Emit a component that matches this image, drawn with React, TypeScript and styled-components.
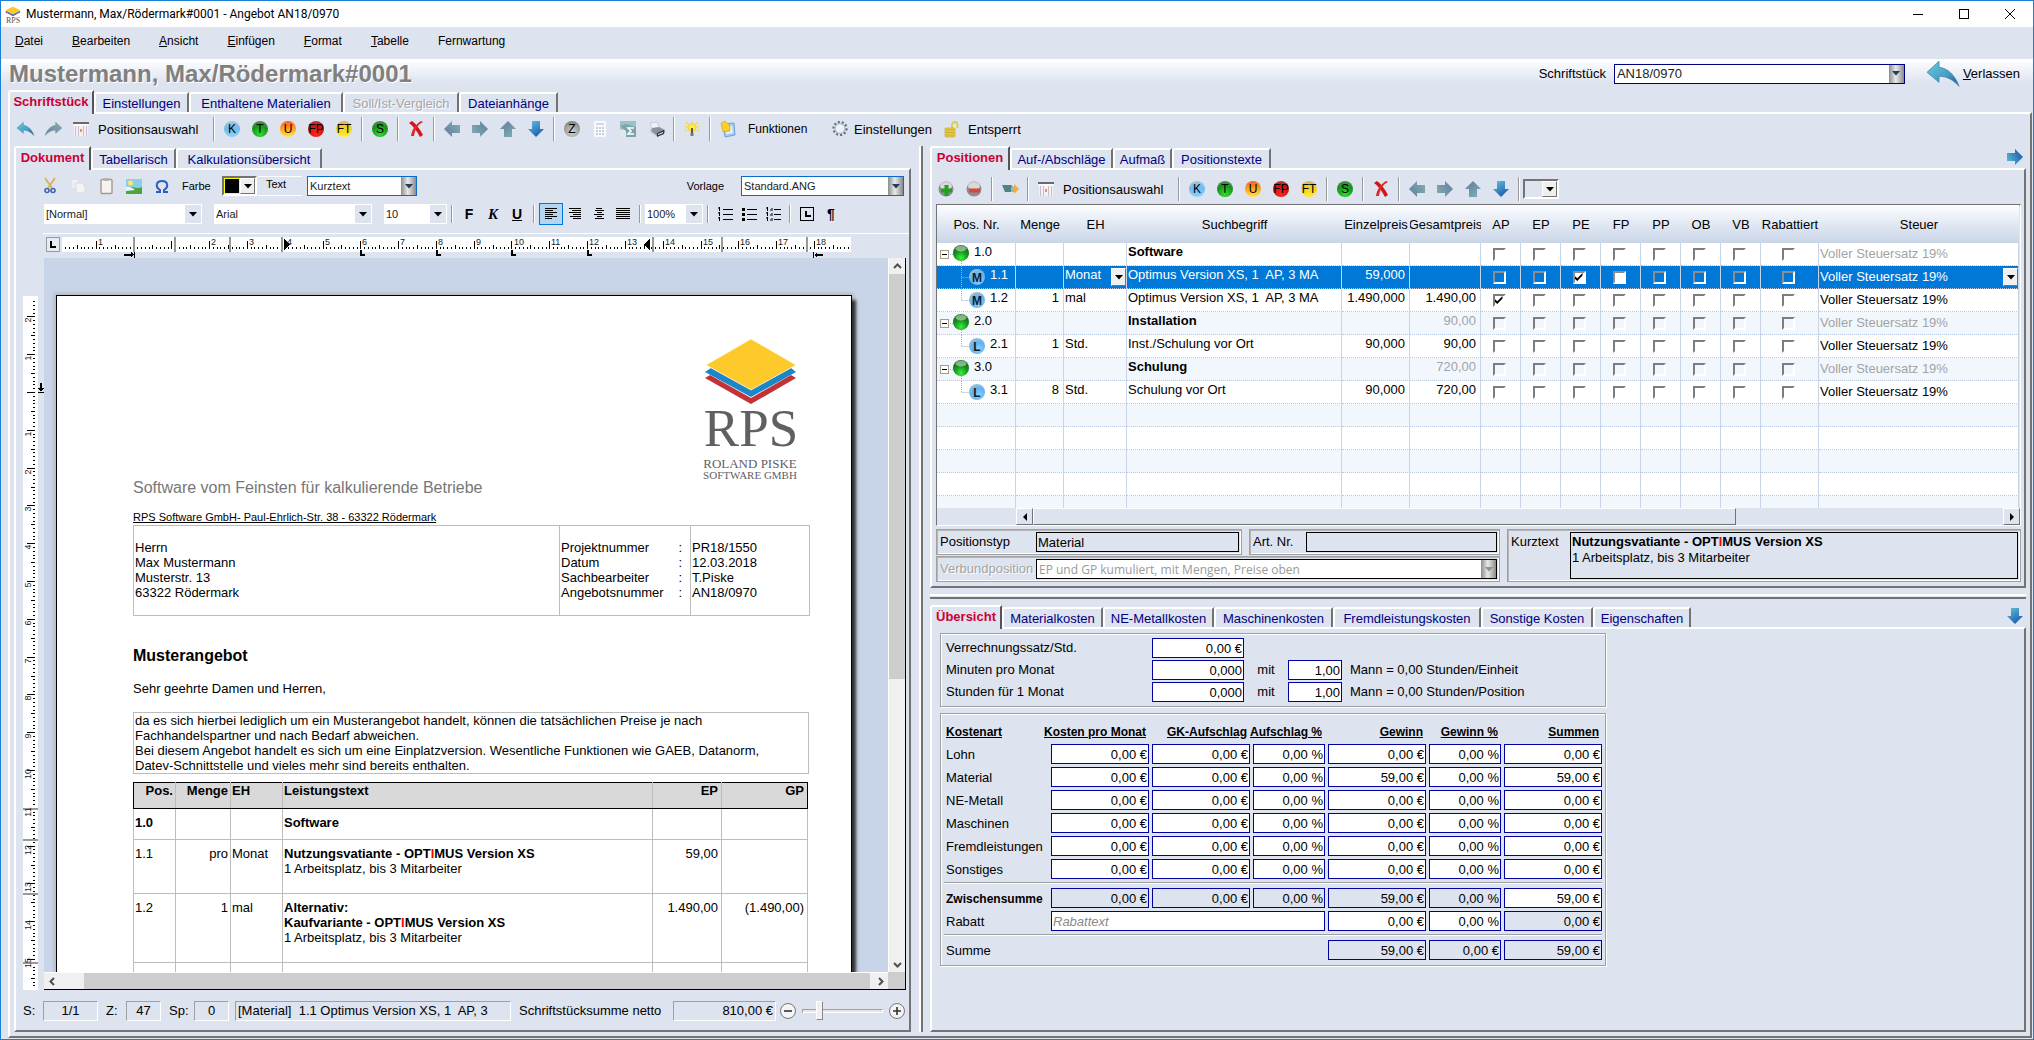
import React from 'react';
import styled, { createGlobalStyle, css } from 'styled-components';

const face = '#dde3ef';
const canvasBlue = '#c8d4e7';
const navy = '#00007f';
const shade = '#737373';
const line = '#a0a0a0';

const GlobalStyle = createGlobalStyle`
  * { box-sizing: border-box; }
  html, body { margin: 0; height: 100%; }
  body, button, input, select, textarea {
    font-family: "Liberation Sans", Arial, sans-serif;
    font-size: 13px;
    color: #000;
  }
  button, input, select { margin: 0; padding: 0; border: 0; border-radius: 0; background: none; }
  h1, h2, p { margin: 0; }
  svg { display: block; flex: none; overflow: visible; }
`;

/* ---------- window chrome ---------- */

const Window = styled.div`
  display: flex;
  flex-direction: column;
  height: 100vh;
  min-height: 800px;
  border: 1px solid #1a7fd6;
  background: ${face};
`;

const TitleBar = styled.header`
  display: flex;
  align-items: center;
  flex: none;
  height: 26px;
  padding-left: 4px;
  gap: 5px;
  background: #fff;
  font-family: Roboto, "Open Sans", sans-serif;
  font-size: 12px;
  line-height: 20px;
`;

const WindowButtons = styled.div`
  display: flex;
  margin-left: auto;
`;

const WindowButton = styled.button`
  display: grid;
  place-items: center;
  width: 46px;
  height: 26px;
`;

const MenuBar = styled.nav`
  display: flex;
  align-items: center;
  flex: none;
  height: 32px;
  gap: 29px;
  padding: 0 14px 4px;
`;

const MenuItem = styled.button`
  font-size: 12px;
  line-height: 20px;
`;

const HeadRow = styled.div`
  display: flex;
  align-items: center;
  flex: none;
  height: 31px;
  padding: 0 13px 2px 8px;
  background: linear-gradient(#fff, ${face} 24px);
`;

const Heading = styled.h1`
  flex: 1;
  font-size: 24px;
  line-height: 28px;
  color: #808080;
  text-shadow: 1px 1px 0 #fff;
`;

const HeadLabel = styled.label`
  margin-right: 8px;
`;

const LeaveButton = styled.button`
  display: flex;
  align-items: center;
  gap: 4px;
  margin-left: 22px;
`;

/* ---------- tabs and panels ---------- */

const TabBar = styled.div`
  display: flex;
  align-items: flex-end;
  flex: none;
  height: 22px;
  padding-right: 3px;
`;

const Tab = styled.button<{ $w: number; $active?: boolean }>`
  width: ${p => p.$w}px;
  height: 20px;
  padding-top: 2px;
  border-top: 2px solid #fff;
  border-left: 2px solid #fff;
  border-right: 2px solid ${shade};
  border-top-left-radius: 3px;
  background: ${face};
  color: ${navy};
  line-height: 16px;
  white-space: nowrap;
  &:disabled { color: #a6a6a6; text-shadow: 1px 1px 0 #fff; }
  ${p => p.$active && css`
    position: relative;
    z-index: 1;
    height: 24px;
    margin-bottom: -2px;
    padding-bottom: 4px;
    border-right-color: #555;
    color: #cc0033;
    font-weight: bold;
  `}
`;

const TabTail = styled.button`
  align-self: flex-start;
  margin-left: auto;
  padding-top: 3px;
`;

const Panel = styled.section`
  display: flex;
  flex-direction: column;
  flex: 1;
  min-height: 0;
  border-style: solid;
  border-width: 2px;
  border-color: #fff ${shade} ${shade} #fff;
`;

const MainPanel = styled(Panel)`
  padding: 0 4px 4px 1px;
`;

const MainWrap = styled.main`
  display: flex;
  flex-direction: column;
  flex: 1;
  min-height: 0;
  margin: 0 1px 1px 7px;
`;

const Columns = styled.div`
  display: grid;
  grid-template-columns: minmax(0, 897fr) 19px minmax(0, 1096fr);
  flex: 1;
  min-height: 0;
  margin-left: 3px;
`;

const Column = styled.div`
  display: flex;
  flex-direction: column;
  min-height: 0;
`;

const SplitterV = styled.div`
  width: 4px;
  margin-left: 8px;
  border-left: 2px solid #fff;
  border-right: 2px solid ${shade};
`;

const SplitterH = styled.div`
  flex: none;
  height: 5px;
  margin: 6px 0;
  border-top: 2px solid #fff;
  border-bottom: 2px solid ${shade};
`;

/* ---------- toolbars ---------- */

const Toolbar = styled.div<{ $h: number; $top?: number; $bottom?: number; $left?: number }>`
  display: flex;
  align-items: center;
  flex: none;
  height: ${p => p.$h}px;
  padding: ${p => `${p.$top ?? 0}px 0 ${p.$bottom ?? 0}px ${p.$left ?? 0}px`};
`;

const IconButton = styled.button`
  display: grid;
  place-items: center;
  flex: none;
  width: 28px;
  height: 24px;
`;

const TextButton = styled.button<{ $small?: boolean; $w?: number; $indent?: number }>`
  flex: none;
  width: ${p => (p.$w ? p.$w + 'px' : 'auto')};
  font-size: ${p => (p.$small ? 12 : 13)}px;
  text-align: left;
  padding-left: ${p => p.$indent ?? 3}px;
`;

const Sep = styled.span`
  flex: none;
  width: 2px;
  height: 24px;
  margin: 0 3px;
  border-left: 1px solid #999;
  border-right: 1px solid #fff;
`;

const FormatSep = styled(Sep)`
  height: 18px;
  margin: 0 4px;
`;

const BallFace = styled.span<{ $tone: string }>`
  display: grid;
  place-items: center;
  width: 16px;
  height: 16px;
  border-radius: 50%;
  background: ${p => p.$tone};
  font-size: 12px;
  line-height: 16px;
`;

const tones = {
  blue: 'linear-gradient(#a9c9dc, #6fbaf0 45%, #8fd2fb)',
  green: 'radial-gradient(circle at 50% 80%, #2fe02f, #1a921a 55%, #6c8f6c)',
  orange: 'linear-gradient(#ff5a1e, #ff9d1e 45%, #ffe84a)',
  red: 'radial-gradient(circle at 50% 80%, #ff2a1a, #d01010 55%, #b0504a)',
  yellow: 'linear-gradient(#d9b45a, #f6d020 45%, #ffee30)',
  grey: 'radial-gradient(circle at 50% 70%, #d5d5d5, #989898 60%, #6c6c6c)',
};

function Ball({ tone, children }: { tone: keyof typeof tones; children: string }) {
  return (
    <IconButton>
      <BallFace $tone={tones[tone]}>{children}</BallFace>
    </IconButton>
  );
}

/* ---------- combo boxes ---------- */

type ComboLook = 'metal' | 'flat' | 'classic';

const ComboFrame = styled.div<{ $w: number; $look: ComboLook; $edge?: string; $ink?: string }>`
  display: flex;
  flex: none;
  width: ${p => p.$w}px;
  height: 20px;
  border: ${p => (p.$look === 'flat' ? '0' : `1px solid ${p.$edge ?? '#1060c0'}`)};
  background: ${p => (p.$look === 'classic' ? face : '#fff')};
  ${p => p.$look === 'classic' && `
    border-width: 2px;
    border-color: ${shade} #fff #fff ${shade};
  `}
  select {
    appearance: none;
    flex: 1;
    min-width: 0;
    padding-left: 2px;
    font-size: ${p => (p.$w > 200 ? 13 : 11)}px;
    color: ${p => p.$ink ?? '#222'};
    opacity: 1;
  }
`;

const ComboArrow = styled.span<{ $look: ComboLook }>`
  display: grid;
  place-items: center;
  flex: none;
  width: ${p => (p.$look === 'flat' ? 18 : 15)}px;
  background: ${p => (p.$look === 'metal' ? 'linear-gradient(90deg, #8d8d8d, #e8e8e8 45%, #d0d0d0 60%, #8a8a8a)' : p.$look === 'flat' ? face : '#efefef')};
  ${p => p.$look === 'flat' && 'border: 1px solid #fff;'}
  ${p => p.$look === 'classic' && `border: 1px solid; border-color: #fff ${shade} ${shade} #fff;`}
`;

const Caret = ({ color = '#000' }: { color?: string }) => (
  <svg width="8" height="5" viewBox="0 0 8 5"><path d="M0 0H8L4 4.5Z" fill={color} /></svg>
);

function Combo(p: { value: string; w: number; look: ComboLook; id?: string; name: string; edge?: string; ink?: string; disabled?: boolean; caret?: string }) {
  return (
    <ComboFrame $w={p.w} $look={p.look} $edge={p.edge} $ink={p.ink}>
      <select id={p.id} aria-label={p.name} defaultValue={p.value} disabled={p.disabled}>
        <option>{p.value}</option>
      </select>
      <ComboArrow $look={p.look}><Caret color={p.caret ?? (p.look === 'metal' ? '#1d3f66' : '#000')} /></ComboArrow>
    </ComboFrame>
  );
}

/* ---------- icons ---------- */

const Swoosh = ({ size, flip, grey }: { size: number; flip?: boolean; grey?: boolean }) => (
  <svg width={size} height={size * 0.8} viewBox="0 0 32 25">
    <defs>
      <linearGradient id={grey ? 'swG' : 'swB'} x1="0" y1="0" x2="1" y2="1">
        <stop offset="0" stopColor={grey ? '#86aeb8' : '#66cbd8'} />
        <stop offset="0.6" stopColor={grey ? '#7593a3' : '#479dc4'} />
        <stop offset="1" stopColor={grey ? '#6d8194' : '#174f8d'} />
      </linearGradient>
    </defs>
    <path
      transform={flip ? 'translate(32 0) scale(-1 1)' : undefined}
      d="M0 11 12 0V6C21 7 28 14 32 25 26 18 19 15 12 15V21Z"
      fill={`url(#${grey ? 'swG' : 'swB'})`}
      stroke={grey ? '#7792a0' : '#3f88a8'}
      strokeWidth="0.8"
    />
  </svg>
);

const Arrow = ({ turn = 0, strong }: { turn?: number; strong?: boolean }) => (
  <svg width="16" height="16" viewBox="0 0 16 16">
    <defs>
      <linearGradient id={strong ? 'arS' : 'arW'} x1="1" y1="0" x2="0" y2="0.6">
        <stop offset="0" stopColor={strong ? '#62c2da' : '#7fb0b4'} />
        <stop offset="1" stopColor={strong ? '#1d5db0' : '#6783a0'} />
      </linearGradient>
    </defs>
    <path transform={`rotate(${turn} 8 8)`} d="M0 8 8 0V4H16V12H8V16Z" fill={`url(#${strong ? 'arS' : 'arW'})`} />
  </svg>
);

const CrossIcon = () => (
  <svg width="16" height="16" viewBox="0 0 16 16">
    <path d="M1 2C5 5 9 10 12 16L15 14C12 8 8 3 4 0Z" fill="#d3141a" />
    <path d="M15 1C9 4 7 9 6 15L3 15C4 8 8 3 13 0Z" fill="#e0242a" />
  </svg>
);

const PickIcon = () => (
  <svg width="16" height="14" viewBox="0 0 16 14">
    <rect x="1" y="1" width="14" height="13" fill="#f4f1f6" />
    <path d="M0 1H16" stroke="#333" strokeWidth="1.4" />
    <path d="M0 3H16" stroke="#fff" />
    <path d="M2.5 4V14M13.5 4V14M5.5 4V14M10.5 4V14" stroke="#c9bccb" />
    <rect x="7" y="7" width="2" height="3" fill="#f29438" />
  </svg>
);

const CalcIcon = () => (
  <svg width="14" height="16" viewBox="0 0 14 16">
    <rect x="1" y="0" width="12" height="16" rx="1" fill="#f8f9fc" />
    <path d="M3 3H11" stroke="#d4d9e4" strokeWidth="2" />
    <path d="M3 7H11M3 10H11M3 13H11" stroke="#c9cfdc" strokeWidth="2" strokeDasharray="2 1" />
  </svg>
);

const SumIcon = () => (
  <svg width="16" height="16" viewBox="0 0 16 16">
    <rect width="16" height="16" fill="#9fc0c4" />
    <path d="M0 9C4 7 8 12 16 8V16H0Z" fill="#dfe9e7" />
    <path d="M0 5 6 3 16 6V16H6V10Z" fill="#7aa5ab" />
    <path d="M14 7H8L11 10 8 13H14" fill="none" stroke="#fff" strokeWidth="1.6" />
  </svg>
);

const PrinterIcon = () => (
  <svg width="17" height="15" viewBox="0 0 17 15">
    <path d="M2 1 9 0 12 6 4 7Z" fill="#eef1f6" stroke="#b2b8c2" strokeWidth="0.6" />
    <path d="M1 6 3 9 9 12V14L2 11Z" fill="#cfd4de" />
    <path d="M4 6 11 5 17 8V11L9 14 3 9Z" fill="#8d929b" />
    <path d="M9 11 16 8V12L9 15Z" fill="#34373d" />
    <path d="M10 12 15 10V11L10 13Z" fill="#fff" />
  </svg>
);

const BulbIcon = () => (
  <svg width="16" height="16" viewBox="0 0 16 16">
    <path d="M8 0V2M1 5 3 6M15 5 13 6M2 1 4 3M14 1 12 3M1 10 3 9M15 10 13 9" stroke="#f5d84a" strokeWidth="1.4" />
    <circle cx="8" cy="6.5" r="4" fill="#ffe94a" stroke="#e6bf1c" strokeWidth="0.6" />
    <path d="M7 7H9V12H7Z" fill="#6b5a20" />
    <path d="M6.5 12H9.5V15H6.5Z" fill="#777" />
  </svg>
);

const ScriptIcon = () => (
  <svg width="16" height="16" viewBox="0 0 16 16">
    <path d="M3 3 14 2 15 14 5 16Z" fill="#a9cdf0" stroke="#5d92cc" strokeWidth="0.8" />
    <path d="M6 6 12 5 13 12 6 13Z" fill="#e8f2fc" />
    <path d="M1 2 5 0 10 5 10 10 3 11Z" fill="#f7d02c" stroke="#d19a10" strokeWidth="0.6" />
  </svg>
);

const GearIcon = () => (
  <svg width="16" height="16" viewBox="0 0 16 16">
    <circle cx="8" cy="7.5" r="5" fill="#eef2f8" stroke="#b4bdca" strokeWidth="1.4" />
    <circle cx="8" cy="7.5" r="6.6" fill="none" stroke="#5f6b7a" strokeWidth="2" strokeDasharray="2 2.1" />
  </svg>
);

const LockIcon = () => (
  <svg width="15" height="17" viewBox="0 0 15 17">
    <path d="M8 8V4C8 0 13.5 0 13.5 4V7" fill="none" stroke="#e2c94c" strokeWidth="1.8" />
    <rect x="1" y="7" width="10" height="9" rx="1" fill="#e9cf45" stroke="#bf9f22" strokeWidth="0.6" />
    <path d="M2 9H10M2 11.5H10M2 14H10" stroke="#c9aa2c" />
  </svg>
);

const ScissorsIcon = () => (
  <svg width="12" height="16" viewBox="0 0 12 16">
    <path d="M1 0 8 10M11 0 4 10" stroke="#d9b45a" strokeWidth="2" />
    <circle cx="3" cy="12.5" r="2" fill="none" stroke="#3f66ad" strokeWidth="1.6" />
    <circle cx="9" cy="12.5" r="2" fill="none" stroke="#3f66ad" strokeWidth="1.6" />
  </svg>
);

const CopyIcon = () => (
  <svg width="14" height="16" viewBox="0 0 14 16">
    <path d="M0 1H6L8 3V11H0Z" fill="#eceef2" stroke="#d3d6dc" strokeWidth="0.6" />
    <path d="M5 5H11L14 8V15H5Z" fill="#f4f4f4" stroke="#cacdd3" strokeWidth="0.6" />
  </svg>
);

const PasteIcon = () => (
  <svg width="13" height="16" viewBox="0 0 13 16">
    <rect x="1" y="1.5" width="11" height="14" rx="1" fill="#f5f3f0" stroke="#a8988a" strokeWidth="1.4" />
    <rect x="4" y="0" width="5" height="3" fill="#b8b2ac" />
  </svg>
);

const ImageIcon = () => (
  <svg width="16" height="15" viewBox="0 0 16 15">
    <rect width="16" height="15" fill="#8ccdf0" />
    <circle cx="4.5" cy="4" r="2.5" fill="#ffe95c" />
    <path d="M0 10C5 6 10 11 16 8V15H0Z" fill="#4aa53a" />
    <path d="M0 8C5 7 7 10 9 11L0 12Z" fill="#eaf6fb" />
  </svg>
);

const OmegaIcon = () => (
  <svg width="14" height="13" viewBox="0 0 14 13">
    <path d="M1 12H5V10C0 7 1 1 7 1S14 7 9 10V12H13" fill="none" stroke="#2b5fc4" strokeWidth="2" />
  </svg>
);

const RoundIcon = ({ plus }: { plus?: boolean }) => (
  <svg width="16" height="16" viewBox="0 0 16 16">
    <circle cx="8" cy="8" r="7.5" fill="#8f8b97" />
    <ellipse cx="8" cy="5" rx="6" ry="4" fill="#d9d7dd" />
    {plus
      ? <path d="M8.5 4V15M3 9.5H14" stroke="#1fa31f" strokeWidth="4" />
      : <path d="M3 9.5H14" stroke="#dc4437" strokeWidth="4" />}
  </svg>
);

const TagIcon = () => (
  <svg width="17" height="10" viewBox="0 0 17 10">
    <path d="M0 1H9L12 4V8H3Z" fill="#4f8580" />
    <path d="M9 3H12V8H9Z" fill="#9fb3c8" />
    <path d="M12 0 17 5 12 10Z" fill="#eeae3a" />
  </svg>
);

const BarsIcon = ({ rows }: { rows: [number, number][] }) => (
  <svg width="14" height="12" viewBox="0 0 14 12">
    {rows.map(([x, w], i) => <rect key={i} x={x} y={i * 2} width={w} height="1" />)}
  </svg>
);

const left: [number, number][] = [[1, 12], [1, 8], [1, 12], [1, 8], [1, 12], [1, 7]];
const right: [number, number][] = [[1, 12], [4, 9], [1, 12], [5, 8], [2, 11], [5, 8]];
const center: [number, number][] = [[4, 6], [3, 9], [5, 5], [2, 10], [5, 5], [3, 9]];
const full: [number, number][] = [[0, 14], [0, 14], [0, 14], [0, 14], [0, 14], [0, 14]];

const ListIcon = ({ kind }: { kind: 'num' | 'dot' | 'multi' }) => (
  <svg width="15" height="14" viewBox="0 0 15 14">
    {[2, 7, 12].map(y => (
      <g key={y}>
        <rect x={kind === 'multi' ? 8 : 5} y={y} width={kind === 'multi' ? 7 : 10} height="1" />
        {kind === 'dot' && <rect x="0" y={y - 1} width="3" height="3" />}
        {kind !== 'dot' && <path d={`M0 ${y - 1}H2M1.5 ${y - 2}V${y + 2}`} stroke="#000" />}
        {kind === 'multi' && <path d={`M4 ${y + 1}H5M6 ${y - 1}V${y + 2}`} stroke="#000" />}
      </g>
    ))}
  </svg>
);

const Diamonds = () => (
  <>
    <path d="M2 42 7 39 48 62 88 39 93 42 48 68Z" fill="#c23237" />
    <path d="M2 36 8 32 48 54 88 32 93 36 48 61Z" fill="#1c86c8" />
    <path d="M3 29 48 3 93 29 48 54Z" fill="#fec92a" stroke="#fff" strokeWidth="0.6" />
  </>
);

const RpsLogo = () => (
  <svg width="96" height="144" viewBox="0 0 96 144" fontFamily="'Liberation Serif', serif" fill="#5f6062">
    <Diamonds />
    <text x="48" y="110" fontSize="53" textAnchor="middle">RPS</text>
    <text x="47" y="132" fontSize="13" textAnchor="middle">ROLAND PISKE</text>
    <text x="47" y="143" fontSize="11" textAnchor="middle">SOFTWARE GMBH</text>
  </svg>
);

const AppIcon = () => (
  <svg width="16" height="17" viewBox="0 0 16 17">
    <g transform="scale(0.165 0.15)"><Diamonds /></g>
    <text x="8" y="17" fontSize="8" textAnchor="middle" fontFamily="'Liberation Serif', serif" fill="#555">RPS</text>
  </svg>
);

/* ---------- document editor ---------- */

const ToolLabel = styled.label`
  font-size: 11px;
`;

const ColorLabel = styled.span`
  flex: none;
  width: 46px;
  padding-left: 6px;
  font-size: 11px;
`;

const ColorPick = styled.button`
  display: flex;
  width: 35px;
  height: 20px;
  margin-right: 1px;
  border: 2px solid;
  border-color: ${shade} #fff #fff ${shade};
`;

const ColorSwatch = styled.span`
  flex: 1;
  height: 16px;
  border: 1px dashed #f7ef1e;
  outline: 1px solid #ff0;
  outline-offset: -1px;
  background: #000;
`;

const TextSlot = styled.div`
  width: 44px;
  height: 20px;
  margin-right: 5px;
  padding-left: 8px;
  border-top: 1px solid #fff;
  border-bottom: 1px solid #fff;
  font-size: 11px;
  line-height: 14px;
`;

const TemplateField = styled.div`
  display: flex;
  align-items: center;
  gap: 17px;
  margin-left: auto;
  padding-right: 5px;
`;

const Gap = styled.span`
  flex: none;
  width: 12px;
`;

const FormatButton = styled.button<{ $on?: boolean }>`
  display: grid;
  place-items: center;
  flex: none;
  width: 24px;
  height: 22px;
  font-size: 14px;
  font-weight: bold;
  border: ${p => (p.$on ? '1px solid #0078d7' : '0')};
  background: ${p => (p.$on ? '#b3d7f3' : 'none')};
`;

const Italic = styled.i`
  font-family: "Liberation Serif", serif;
  font-size: 15px;
`;

const Rule = styled.hr`
  flex: none;
  width: 100%;
  height: 1px;
  margin: 7px 0 3px;
  border: 0;
  background: linear-gradient(90deg, transparent 27px, #fff 27px);
`;

const RulerRow = styled.div`
  flex: none;
  height: 21px;
  padding-left: 28px;
  overflow: hidden;
`;

const Editor = styled.div`
  display: grid;
  grid-template-columns: 28px minmax(0, 1fr);
  flex: 1;
  min-height: 0;
  padding-right: 3px;
`;

const SideRuler = styled.div`
  padding: 38px 0 0 7px;
  overflow: hidden;
`;

const DocFrame = styled.div`
  display: grid;
  grid-template-columns: minmax(0, 1fr) 17px;
  grid-template-rows: minmax(0, 1fr) 17px;
  min-height: 0;
  border-right: 1px solid #000;
  border-bottom: 1px solid #000;
`;

const Canvas = styled.div`
  overflow: hidden;
  padding: 37px 0 0 12px;
  background: ${canvasBlue};
`;

const ScrollV = styled.div`
  display: flex;
  flex-direction: column;
  background: #f0f0f0;
  border-left: 1px solid #fff;
`;

const ScrollH = styled.div`
  display: flex;
  background: #f0f0f0;
  border-top: 1px solid #fff;
`;

const ScrollButton = styled.button`
  display: grid;
  place-items: center;
  flex: none;
  width: 16px;
  height: 16px;
`;

const ThumbV = styled.div`
  height: 405px;
  margin-bottom: auto;
  background: #cdcdcd;
`;

const ThumbH = styled.div`
  flex: 1;
  margin: 0 2px 0 24px;
  background: #cdcdcd;
`;

const Corner = styled.div`
  background: #cdcdcd;
`;

const Paper = styled.article`
  width: 796px;
  min-height: 900px;
  padding: 40px 41px 0 76px;
  border: 1px solid #000;
  background: #fff;
  box-shadow: 4px 5px 3px 0 #333, 0 0 3px 2px #b9bcc4;
  line-height: 15px;
`;

const LogoRow = styled.div`
  display: flex;
  justify-content: flex-end;
  padding-right: 11px;
`;

const Slogan = styled.p`
  padding-top: 1px;
  font-size: 16px;
  line-height: 14px;
  color: #777;
`;

const Sender = styled.p`
  margin: 15px 0 1px;
  font-size: 11px;
  line-height: 14px;
  text-decoration: underline;
`;

const AddressBox = styled.div`
  display: grid;
  grid-template-columns: minmax(0, 1fr) 131px 119px;
  height: 91px;
  border: 1px solid #bdbdbd;
`;

const AddressCell = styled.div`
  padding: 14px 2px 0 1px;
  & + & { border-left: 1px solid #bdbdbd; }
`;

const MetaLine = styled.div`
  display: flex;
  justify-content: space-between;
  padding-right: 6px;
`;

const DocTitle = styled.h2`
  margin: 30px 0 15px;
  font-size: 16px;
  line-height: 20px;
`;

const IntroBox = styled.div`
  height: 62px;
  margin: 16px 1px 8px 0;
  padding-left: 1px;
  border: 1px solid #bdbdbd;
  white-space: nowrap;
`;

const OfferTable = styled.table`
  width: 675px;
  table-layout: fixed;
  border-collapse: collapse;
  th, td {
    vertical-align: top;
    border: 1px solid #bdbdbd;
    padding: 6px 4px 0 1px;
    text-align: left;
  }
  th {
    height: 26px;
    padding-top: 0;
    border-top-color: #000;
    border-bottom-color: #000;
    background: #d9d9d9;
  }
  th:first-child { border-left-color: #000; }
  th:last-child { border-right-color: #000; }
  td:nth-child(2), th:nth-child(1), th:nth-child(2) { text-align: right; padding-right: 2px; }
  td:nth-child(n + 5), th:nth-child(n + 5) { text-align: right; padding-right: 3px; }
`;

const OfferRow = styled.tr<{ $h: number; $bold?: boolean }>`
  height: ${p => p.$h}px;
  font-weight: ${p => (p.$bold ? 'bold' : 'normal')};
`;

const Red = styled.span`
  color: #f00;
`;

const StatusBar = styled.footer`
  display: flex;
  align-items: center;
  flex: none;
  height: 40px;
  padding: 1px 4px 0 7px;
`;

const StatusLabel = styled.span<{ $w: number }>`
  flex: none;
  width: ${p => p.$w}px;
`;

const StatusBox = styled.span<{ $w?: number; $align?: string; $gap: number }>`
  flex: ${p => (p.$w ? 'none' : '1')};
  width: ${p => (p.$w ? p.$w + 'px' : 'auto')};
  height: 20px;
  margin-right: ${p => p.$gap}px;
  padding: 0 2px;
  border: 1px solid;
  border-color: ${line} #fff #fff ${line};
  line-height: 18px;
  text-align: ${p => p.$align ?? 'center'};
  white-space: pre;
  overflow: hidden;
`;

const ZoomButton = styled.button`
  display: grid;
  place-items: center;
  flex: none;
  width: 16px;
  height: 16px;
  border: 1px solid #777;
  border-radius: 50%;
  background: #f4f4f4;
`;

const Slider = styled.input`
  appearance: none;
  flex: none;
  width: 81px;
  height: 20px;
  margin: 0 6px;
  &::-webkit-slider-runnable-track {
    height: 4px;
    border: 1px solid;
    border-color: ${line} #fff #fff ${line};
    background: #e6e6e6;
  }
  &::-webkit-slider-thumb {
    appearance: none;
    width: 7px;
    height: 19px;
    margin-top: -9px;
    border: 1px solid;
    border-color: #fff #888 #888 #fff;
    background: #f0f0f0;
  }
`;

const CM = 37.8;

function TopRuler() {
  const zero = 89.5;
  const ticks = Array.from({ length: 208 }, (_, i) => i - 18);
  return (
    <svg width="810" height="21" viewBox="0 0 810 21" fontSize="9" shapeRendering="crispEdges">
      <rect x="2.5" y="0.5" width="13" height="14" fill="#e8ebf2" stroke="#999" />
      <path d="M7 4V10H12" fill="none" stroke="#000" strokeWidth="2" />
      <rect x="18" y="0" width="789" height="15" fill="#fff" />
      {ticks.map(i => {
        const x = Math.round(zero + (i * CM) / 10);
        const h = i % 10 === 0 ? 8 : i % 5 === 0 ? 4 : 2;
        return <rect key={i} x={x} y={12 - h} width="1" height={h} />;
      })}
      {[90, 131, 186, 238, 609, 678, 763].map(x => <rect key={x} x={x - 1} y="0" width="2" height="15" fill="#999" />)}
      {[-1, 2, 3, 4, 5, 6, 7, 8, 9, 10, 11, 12, 13, 14, 15, 16, 17, 18].map(n => (
        <text key={n} x={Math.round(zero + n * CM) + 2} y="8" fill="#222">{Math.abs(n)}</text>
      ))}
      <path d="M240 2 246 7 240 13ZM606 2V13L600 7.5Z" />
      {[316, 392, 467, 543].map(x => <path key={x} d={`M${x + 1} 13V18H${x + 5}`} fill="none" stroke="#000" strokeWidth="2" />)}
      <path d="M80 17H87V15L90 18 87 20V19H80ZM90 15H91V21H90ZM769 15H770V21H769ZM779 17H773V15L770 18 773 20V19H779Z" />
    </svg>
  );
}

function LeftRuler() {
  const zero = 96;
  const ticks = Array.from({ length: 182 }, (_, i) => i - 24);
  return (
    <svg width="21" height="694" viewBox="0 0 21 694" fontSize="9" shapeRendering="crispEdges">
      <rect width="15" height="694" fill="#fff" />
      {ticks.map(i => {
        const y = Math.round(zero + (i * CM) / 10);
        const w = i % 10 === 0 ? 8 : i % 5 === 0 ? 4 : 2;
        return <rect key={i} x={12 - w} y={y} width={w} height="1" />;
      })}
      {[513, 544, 598, 667].map(y => <rect key={y} y={y - 1} width="15" height="2" fill="#999" />)}
      {[-2, -1, 1, 2, 3, 4, 5, 6, 7, 8, 9, 10, 11, 12, 13, 14, 15].map(n => {
        const y = Math.round(zero + n * CM) + 4;
        return <text key={n} transform={`translate(8 ${y}) rotate(-90)`} textAnchor="middle" fill="#222">{Math.abs(n)}</text>;
      })}
      <path d="M17 87H19V92H21L18 96 15 92H17ZM15 96H21V97H15Z" />
    </svg>
  );
}

const Chevron = ({ turn }: { turn: number }) => (
  <svg width="9" height="9" viewBox="0 0 9 9">
    <path transform={`rotate(${turn} 4.5 4.5)`} d="M1 6 4.5 2.5 8 6" fill="none" stroke="#505050" strokeWidth="2" />
  </svg>
);

const Optimus = ({ lead }: { lead: string }) => <b>{lead} - OPT<Red>I</Red>MUS Version XS</b>;

function DocumentView() {
  return (
    <Column>
      <TabBar>
        <Tab $w={77} $active>Dokument</Tab>
        <Tab $w={85}>Tabellarisch</Tab>
        <Tab $w={146}>Kalkulationsübersicht</Tab>
      </TabBar>
      <Panel>
        <Toolbar $h={32} $left={20}>
          <IconButton aria-label="Ausschneiden"><ScissorsIcon /></IconButton>
          <IconButton aria-label="Kopieren"><CopyIcon /></IconButton>
          <IconButton aria-label="Einfügen"><PasteIcon /></IconButton>
          <IconButton aria-label="Bild"><ImageIcon /></IconButton>
          <IconButton aria-label="Sonderzeichen"><OmegaIcon /></IconButton>
          <ColorLabel>Farbe</ColorLabel>
          <ColorPick aria-label="Textfarbe">
            <ColorSwatch />
            <ComboArrow $look="classic"><Caret /></ComboArrow>
          </ColorPick>
          <TextSlot>Text</TextSlot>
          <Combo name="Textart" value="Kurztext" w={110} look="metal" edge="#0a6cc8" />
          <TemplateField>
            <ToolLabel htmlFor="vorlage">Vorlage</ToolLabel>
            <Combo id="vorlage" name="Vorlage" value="Standard.ANG" w={163} look="metal" edge="#0a6cc8" />
          </TemplateField>
        </Toolbar>
        <Toolbar $h={24} $left={28}>
          <Combo name="Formatvorlage" value="[Normal]" w={158} look="flat" />
          <Gap />
          <Combo name="Schriftart" value="Arial" w={158} look="flat" />
          <Gap />
          <Combo name="Schriftgröße" value="10" w={63} look="flat" />
          <FormatSep />
          <FormatButton>F</FormatButton>
          <FormatButton><Italic>K</Italic></FormatButton>
          <FormatButton><u>U</u></FormatButton>
          <FormatSep />
          <FormatButton $on aria-label="Linksbündig"><BarsIcon rows={left} /></FormatButton>
          <FormatButton aria-label="Rechtsbündig"><BarsIcon rows={right} /></FormatButton>
          <FormatButton aria-label="Zentriert"><BarsIcon rows={center} /></FormatButton>
          <FormatButton aria-label="Blocksatz"><BarsIcon rows={full} /></FormatButton>
          <FormatSep />
          <Combo name="Zoom" value="100%" w={58} look="flat" />
          <FormatSep />
          <FormatButton aria-label="Nummerierung"><ListIcon kind="num" /></FormatButton>
          <FormatButton aria-label="Aufzählung"><ListIcon kind="dot" /></FormatButton>
          <FormatButton aria-label="Gliederung"><ListIcon kind="multi" /></FormatButton>
          <FormatSep />
          <FormatButton aria-label="Tabulator">
            <svg width="14" height="14" viewBox="0 0 14 14">
              <rect x="0.5" y="0.5" width="13" height="13" fill="none" stroke="#000" />
              <path d="M6 4V9H11" fill="none" stroke="#000" strokeWidth="2" />
            </svg>
          </FormatButton>
          <FormatButton>¶</FormatButton>
        </Toolbar>
        <Rule />
        <RulerRow><TopRuler /></RulerRow>
        <Editor>
          <SideRuler><LeftRuler /></SideRuler>
          <DocFrame>
            <Canvas>
              <Paper>
                <LogoRow><RpsLogo /></LogoRow>
                <Slogan>Software vom Feinsten für kalkulierende Betriebe</Slogan>
                <Sender>RPS Software GmbH- Paul-Ehrlich-Str. 38 - 63322 Rödermark</Sender>
                <AddressBox>
                  <AddressCell>Herrn<br />Max Mustermann<br />Musterstr. 13<br />63322 Rödermark</AddressCell>
                  <AddressCell>
                    {['Projektnummer', 'Datum', 'Sachbearbeiter', 'Angebotsnummer'].map(t => (
                      <MetaLine key={t}><span>{t}</span><span>:</span></MetaLine>
                    ))}
                  </AddressCell>
                  <AddressCell>PR18/1550<br />12.03.2018<br />T.Piske<br />AN18/0970</AddressCell>
                </AddressBox>
                <DocTitle>Musterangebot</DocTitle>
                <p>Sehr geehrte Damen und Herren,</p>
                <IntroBox>
                  da es sich hierbei lediglich um ein Musterangebot handelt, können die tatsächlichen Preise je nach<br />
                  Fachhandelspartner und nach Bedarf abweichen.<br />
                  Bei diesem Angebot handelt es sich um eine Einplatzversion. Wesentliche Funktionen wie GAEB, Datanorm,<br />
                  Datev-Schnittstelle und vieles mehr sind bereits enthalten.
                </IntroBox>
                <OfferTable>
                  <colgroup>
                    <col width={42} /><col width={55} /><col width={52} /><col /><col width={69} /><col width={86} />
                  </colgroup>
                  <thead>
                    <tr><th>Pos.</th><th>Menge</th><th>EH</th><th>Leistungstext</th><th>EP</th><th>GP</th></tr>
                  </thead>
                  <tbody>
                    <OfferRow $h={31} $bold><td>1.0</td><td /><td /><td>Software</td><td /><td /></OfferRow>
                    <OfferRow $h={54}>
                      <td>1.1</td><td>pro</td><td>Monat</td>
                      <td><Optimus lead="Nutzungsvatiante" /><br />1 Arbeitsplatz, bis 3 Mitarbeiter</td>
                      <td>59,00</td><td />
                    </OfferRow>
                    <OfferRow $h={69}>
                      <td>1.2</td><td>1</td><td>mal</td>
                      <td><b>Alternativ:</b><br /><Optimus lead="Kaufvariante" /><br />1 Arbeitsplatz, bis 3 Mitarbeiter</td>
                      <td>1.490,00</td><td>(1.490,00)</td>
                    </OfferRow>
                    <OfferRow $h={69}><td /><td /><td /><td /><td /><td /></OfferRow>
                  </tbody>
                </OfferTable>
              </Paper>
            </Canvas>
            <ScrollV>
              <ScrollButton aria-label="Nach oben"><Chevron turn={0} /></ScrollButton>
              <ThumbV />
              <ScrollButton aria-label="Nach unten"><Chevron turn={180} /></ScrollButton>
            </ScrollV>
            <ScrollH>
              <ScrollButton aria-label="Nach links"><Chevron turn={270} /></ScrollButton>
              <ThumbH />
              <ScrollButton aria-label="Nach rechts"><Chevron turn={90} /></ScrollButton>
            </ScrollH>
            <Corner />
          </DocFrame>
        </Editor>
        <StatusBar>
          <StatusLabel $w={20}>S:</StatusLabel>
          <StatusBox $w={55} $gap={8}>1/1</StatusBox>
          <StatusLabel $w={20}>Z:</StatusLabel>
          <StatusBox $w={35} $gap={8}>47</StatusBox>
          <StatusLabel $w={25}>Sp:</StatusLabel>
          <StatusBox $w={35} $gap={6}>0</StatusBox>
          <StatusBox $align="left" $gap={8}>{'[Material]  1.1 Optimus Version XS, 1  AP, 3'}</StatusBox>
          <StatusLabel $w={154}>Schriftstücksumme netto</StatusLabel>
          <StatusBox $w={103} $align="right" $gap={4}>810,00 €</StatusBox>
          <ZoomButton aria-label="Verkleinern"><svg width="8" height="8"><path d="M0 4H8" stroke="#333" strokeWidth="1.6" /></svg></ZoomButton>
          <Slider type="range" aria-label="Zoom" defaultValue={18} />
          <ZoomButton aria-label="Vergrößern"><svg width="8" height="8"><path d="M0 4H8M4 0V8" stroke="#333" strokeWidth="1.6" /></svg></ZoomButton>
        </StatusBar>
      </Panel>
    </Column>
  );
}

/* ---------- positions grid ---------- */

const PositionsPanel = styled(Panel)`
  flex: none;
  padding: 0 3px 4px 0;
`;

const GridBox = styled.div`
  margin-left: 4px;
  border: 1px solid;
  border-color: ${shade} #fff #fff ${shade};
  box-shadow: inset 0 1px 0 ${line};
`;

const GridView = styled.div`
  height: 303px;
  overflow: hidden;
`;

const Grid = styled.table`
  width: 100%;
  table-layout: fixed;
  border-spacing: 0;
  padding-right: 1px;
`;

const HeadCell = styled.th`
  height: 38px;
  padding: 0;
  background: linear-gradient(#fcfdff, ${canvasBlue});
  font-weight: normal;
`;

const HeadText = styled.span`
  display: flex;
  justify-content: center;
  overflow: hidden;
  white-space: nowrap;
`;

const GridRow = styled.tr<{ $alt?: boolean; $selected?: boolean }>`
  background: ${p => (p.$selected ? '#0078d7' : p.$alt ? '#f2f7fe' : '#fff')};
  color: ${p => (p.$selected ? '#fff' : '#000')};
`;

const Cell = styled.td<{ $right?: number; $left?: number; $bold?: boolean; $dim?: boolean; $low?: boolean }>`
  height: 23px;
  padding: 0 ${p => p.$right ?? 0}px 0 ${p => p.$left ?? 0}px;
  border-right: 1px solid ${canvasBlue};
  border-bottom: 1px dotted #bccbe2;
  vertical-align: top;
  text-align: ${p => (p.$right ? 'right' : 'left')};
  font-weight: ${p => (p.$bold ? 'bold' : 'normal')};
  line-height: ${p => (p.$low ? 22 : 18)}px;
  white-space: pre;
  ${p => p.$dim && 'color: #a3a3a3;'}
`;

const PosWrap = styled.div`
  display: flex;
  gap: 1px;
`;

const CellFlex = styled.div`
  display: flex;
  justify-content: space-between;
`;

const DropButton = styled.button`
  display: grid;
  place-items: center;
  width: 15px;
  height: 18px;
  margin-top: 2px;
  border: 1px solid;
  border-color: #fff ${shade} ${shade} #fff;
  background: #f0f0f0;
`;

const Check = styled.input<{ $selected?: boolean; $solid?: boolean }>`
  appearance: none;
  display: block;
  width: 13px;
  height: 13px;
  margin: 5px auto 0;
  border: 2px solid;
  border-color: ${p => (p.$selected ? '#8d8d8d #fff #fff #8d8d8d' : '#7d7d7d #fff #fff #7d7d7d')};
  background: ${p => (p.$solid ? '#fff' : 'transparent')};
  &:checked { background: #fff; }
  &:checked::after {
    content: '';
    display: block;
    width: 8px;
    height: 8px;
    background: #000;
    clip-path: polygon(0 35%, 35% 65%, 100% 0, 100% 32%, 35% 100%, 0 70%);
  }
`;

const CheckSlot = styled.div`
  padding-right: 3px;
`;

const GridScroll = styled.div`
  display: flex;
  height: 17px;
  padding-left: 79px;
`;

const GridScrollButton = styled.button`
  display: grid;
  place-items: center;
  flex: none;
  width: 17px;
  border: 1px solid;
  border-color: #fff ${shade} ${shade} #fff;
`;

const GridThumb = styled.div`
  flex: 0 0 70%;
  margin-right: auto;
  border: 1px solid;
  border-color: #fff ${shade} ${shade} #fff;
`;

type Row = {
  nr: string; kind: 'group' | 'M' | 'L'; qty?: string; unit?: string; text: string;
  ep?: string; gp?: string; dim?: boolean; sel?: boolean; checked?: number; last?: boolean;
};

const rows: Row[] = [
  { nr: '1.0', kind: 'group', text: 'Software', dim: true },
  { nr: '1.1', kind: 'M', unit: 'Monat', text: 'Optimus Version XS, 1  AP, 3 MA', ep: '59,000', sel: true, checked: 2 },
  { nr: '1.2', kind: 'M', qty: '1', unit: 'mal', text: 'Optimus Version XS, 1  AP, 3 MA', ep: '1.490,000', gp: '1.490,00', checked: 0, last: true },
  { nr: '2.0', kind: 'group', text: 'Installation', gp: '90,00', dim: true },
  { nr: '2.1', kind: 'L', qty: '1', unit: 'Std.', text: 'Inst./Schulung vor Ort', ep: '90,000', gp: '90,00', last: true },
  { nr: '3.0', kind: 'group', text: 'Schulung', gp: '720,00', dim: true },
  { nr: '3.1', kind: 'L', qty: '8', unit: 'Std.', text: 'Schulung vor Ort', ep: '90,000', gp: '720,00', last: true },
];

const flags = ['AP', 'EP', 'PE', 'FP', 'PP', 'OB', 'VB', 'Rabattiert'];

function TreeIcon({ row }: { row: Row }) {
  const group = row.kind === 'group';
  return (
    <svg width={group ? 36 : 52} height="22" viewBox={`0 0 ${group ? 36 : 52} 22`}>
      <defs>
        <radialGradient id="treeGreen" cx="0.5" cy="0.8" r="0.8">
          <stop offset="0" stopColor="#3bf03b" /><stop offset="0.5" stopColor="#17961f" /><stop offset="1" stopColor="#1c5a1c" />
        </radialGradient>
        <radialGradient id="treeBlue" cx="0.6" cy="0.7" r="0.7">
          <stop offset="0" stopColor="#8ed0fb" /><stop offset="0.6" stopColor="#63b2ee" /><stop offset="1" stopColor="#9cbfd6" />
        </radialGradient>
      </defs>
      {group ? (
        <>
          <path d="M13 11.5H17M24.5 18V23" stroke="#9fb2cc" strokeDasharray="1 1" />
          <rect x="3.5" y="7.5" width="8" height="8" fill="#fff" stroke="#a39f86" />
          <path d="M5 11.5H10" stroke="#000" />
          <circle cx="24" cy="10" r="8" fill="url(#treeGreen)" />
          <ellipse cx="24" cy="5.5" rx="5.5" ry="3" fill="#fff" opacity="0.45" />
        </>
      ) : (
        <>
          <path d={`M24.5 0V${row.last ? 12 : 23}M24.5 11.5H33`} stroke="#9fb2cc" strokeDasharray="1 1" />
          <circle cx="40" cy="11" r="8" fill="url(#treeBlue)" />
          <text x="40" y="16" fontSize="12" fontWeight="bold" textAnchor="middle" fill="#10202c">{row.kind}</text>
        </>
      )}
    </svg>
  );
}

const Details = styled.div`
  display: grid;
  grid-template-columns: 306px 251px minmax(0, 1fr);
  grid-template-rows: 26px 26px;
  column-gap: 7px;
  row-gap: 1px;
  margin-left: 4px;
  padding-top: 3px;
`;

const Field = styled.div<{ $wide?: boolean; $tall?: boolean }>`
  display: flex;
  align-items: ${p => (p.$tall ? 'stretch' : 'center')};
  padding: 2px 2px 2px 3px;
  border: 1px solid ${line};
  box-shadow: inset 1px 1px 0 #b5b5b5, inset -1px -1px 0 #fff;
  ${p => p.$wide && 'grid-column: 1 / 3;'}
  ${p => p.$tall && 'grid-column: 3; grid-row: 1 / 3;'}
`;

const FieldLabel = styled.label<{ $w: number; $dim?: boolean }>`
  flex: none;
  width: ${p => p.$w}px;
  line-height: 20px;
  ${p => p.$dim && 'color: #a3a3a3; text-shadow: 1px 1px 0 #fff;'}
`;

const FieldInput = styled.input`
  flex: 1;
  min-width: 0;
  height: 20px;
  padding-left: 1px;
  border: 1px solid #000;
`;

const ShortText = styled.div`
  flex: 1;
  padding: 1px;
  border: 1px solid #000;
  line-height: 16px;
`;

const VerbundCombo = styled.div`
  flex: 1;
  & > div { width: 100%; }
  select { font-family: "Open Sans", "Noto Sans", sans-serif; font-size: 12px; }
`;

function PositionsView() {
  return (
    <>
      <TabBar>
        <Tab $w={80} $active>Positionen</Tab>
        <Tab $w={103}>Auf-/Abschläge</Tab>
        <Tab $w={59}>Aufmaß</Tab>
        <Tab $w={99}>Positionstexte</Tab>
        <TabTail aria-label="Nächster Bereich"><Arrow strong turn={180} /></TabTail>
      </TabBar>
      <PositionsPanel>
        <Toolbar $h={34} $top={4}>
          <IconButton aria-label="Hinzufügen"><RoundIcon plus /></IconButton>
          <IconButton aria-label="Entfernen"><RoundIcon /></IconButton>
          <Sep />
          <IconButton aria-label="Etikett"><TagIcon /></IconButton>
          <Sep />
          <SharedTools />
          <Sep />
          <Combo name="Filter" value="" w={36} look="classic" />
        </Toolbar>
        <GridBox>
          <GridView>
            <Grid>
              <colgroup>
                <col width={79} /><col width={48} /><col width={63} /><col width={215} /><col width={68} /><col width={71} />
                {flags.map(f => <col key={f} width={f === 'Rabattiert' ? 58 : 40} />)}
                <col />
              </colgroup>
              <thead>
                <tr>
                  {['Pos. Nr.', 'Menge', 'EH', 'Suchbegriff', 'Einzelpreis', 'Gesamtpreis', ...flags, 'Steuer'].map(h => (
                    <HeadCell key={h}><HeadText>{h}</HeadText></HeadCell>
                  ))}
                </tr>
              </thead>
              <tbody>
                {rows.map((r, i) => (
                  <GridRow key={r.nr} $selected={r.sel} $alt={i > 1 && i % 2 === 1}>
                    <Cell><PosWrap><TreeIcon row={r} />{r.nr}</PosWrap></Cell>
                    <Cell $right={4}>{r.qty}</Cell>
                    <Cell $left={1}>
                      {r.sel
                        ? <CellFlex>{r.unit}<DropButton aria-label="Einheit wählen"><Caret /></DropButton></CellFlex>
                        : r.unit}
                    </Cell>
                    <Cell $left={1} $bold={r.kind === 'group'}>{r.text}</Cell>
                    <Cell $right={4}>{r.ep}</Cell>
                    <Cell $right={4} $dim={r.dim}>{r.gp}</Cell>
                    {flags.map((f, k) => (
                      <Cell key={f}>
                        <CheckSlot>
                          <Check
                            type="checkbox"
                            aria-label={`${r.nr} ${f}`}
                            defaultChecked={r.checked === k}
                            $selected={r.sel}
                            $solid={r.sel && k === 3}
                          />
                        </CheckSlot>
                      </Cell>
                    ))}
                    <Cell $left={1} $low $dim={r.dim}>
                      {r.sel
                        ? <CellFlex>Voller Steuersatz 19%<DropButton aria-label="Steuer wählen"><Caret /></DropButton></CellFlex>
                        : 'Voller Steuersatz 19%'}
                    </Cell>
                  </GridRow>
                ))}
                {[7, 8, 9, 10, 11].map(i => (
                  <GridRow key={i} $alt={i % 2 === 1}>
                    {Array.from({ length: 15 }, (_, k) => <Cell key={k} />)}
                  </GridRow>
                ))}
              </tbody>
            </Grid>
          </GridView>
          <GridScroll>
            <GridScrollButton aria-label="Nach links"><svg width="4" height="8"><path d="M4 0V8L0 4Z" /></svg></GridScrollButton>
            <GridThumb />
            <GridScrollButton aria-label="Nach rechts"><svg width="4" height="8"><path d="M0 0V8L4 4Z" /></svg></GridScrollButton>
          </GridScroll>
        </GridBox>
        <Details>
          <Field>
            <FieldLabel htmlFor="ptyp" $w={96}>Positionstyp</FieldLabel>
            <FieldInput id="ptyp" defaultValue="Material" />
          </Field>
          <Field>
            <FieldLabel htmlFor="artnr" $w={53}>Art. Nr.</FieldLabel>
            <FieldInput id="artnr" />
          </Field>
          <Field $tall>
            <FieldLabel as="span" $w={59}>Kurztext</FieldLabel>
            <ShortText><Optimus lead="Nutzungsvatiante" /><br />1 Arbeitsplatz, bis 3 Mitarbeiter</ShortText>
          </Field>
          <Field $wide>
            <FieldLabel htmlFor="verbund" $w={96} $dim>Verbundposition</FieldLabel>
            <VerbundCombo>
              <Combo id="verbund" name="Verbundposition" value="EP und GP kumuliert, mit Mengen, Preise oben" w={461} look="metal" edge="#000" ink="#9a9a9a" disabled caret="#909090" />
            </VerbundCombo>
          </Field>
        </Details>
      </PositionsPanel>
    </>
  );
}

/* ---------- cost overview ---------- */

const CostPanel = styled(Panel)`
  align-items: flex-start;
  padding: 4px 0 0 8px;
`;

const Group = styled.div`
  width: 666px;
  border: 1px solid ${line};
  box-shadow: inset 1px 1px 0 #fff, 1px 1px 0 #fff;
`;

const RateGrid = styled(Group)`
  display: grid;
  grid-template-columns: 206px 92px 44px 54px 1fr;
  row-gap: 2px;
  margin-bottom: 6px;
  padding: 4px 5px;
  line-height: 20px;
`;

const Mid = styled.span`
  text-align: center;
`;

const Tail = styled.span`
  padding-left: 8px;
`;

const Num = styled.input<{ $ro?: boolean }>`
  display: block;
  width: 100%;
  height: 20px;
  padding: 0 1px;
  border: 1px solid #0000a0;
  background: ${p => (p.$ro ? face : '#fff')};
  text-align: right;
`;

const RateNum = styled(Num)`
  grid-column: 2;
`;

const RabattInput = styled(Num)`
  text-align: left;
  &::placeholder { color: #8a8a8a; font-style: italic; opacity: 1; }
`;

const CostTable = styled.table`
  width: 100%;
  table-layout: fixed;
  border-spacing: 3px;
  padding-bottom: 2px;
  td, th { padding: 0; }
  tbody th { padding-left: 2px; font-weight: normal; text-align: left; white-space: nowrap; }
`;

const CostHead = styled.th`
  height: 24px;
  vertical-align: bottom;
`;

const CostHeadText = styled.span<{ $first?: boolean }>`
  display: flex;
  justify-content: ${p => (p.$first ? 'flex-start' : 'flex-end')};
  padding: 0 3px 0 2px;
  font-size: 12px;
  line-height: 18px;
  text-decoration: underline;
  white-space: nowrap;
`;

const Divider = styled.td`
  height: 3px;
  background: linear-gradient(${line} 1px, #fff 1px, #fff 2px, transparent 2px);
`;

const Subtotal = styled.b`
  font-size: 12px;
`;

const costCols = ['Kosten pro Monat', 'GK-Aufschlag', 'Aufschlag %', 'Gewinn', 'Gewinn %', 'Summen'];
const zeroRow = ['0,00 €', '0,00 €', '0,00 %', '0,00 €', '0,00 %', '0,00 €'];
const materialRow = ['0,00 €', '0,00 €', '0,00 %', '59,00 €', '0,00 %', '59,00 €'];
const costRows: [string, string[]][] = [
  ['Lohn', zeroRow],
  ['Material', materialRow],
  ['NE-Metall', zeroRow],
  ['Maschinen', zeroRow],
  ['Fremdleistungen', zeroRow],
  ['Sonstiges', zeroRow],
];

const costTabs: [string, number][] = [
  ['Materialkosten', 101], ['NE-Metallkosten', 111], ['Maschinenkosten', 119],
  ['Fremdleistungskosten', 148], ['Sonstige Kosten', 112], ['Eigenschaften', 98],
];

function CostView() {
  return (
    <>
      <TabBar>
        <Tab $w={72} $active>Übersicht</Tab>
        {costTabs.map(([t, w]) => <Tab key={t} $w={w}>{t}</Tab>)}
        <TabTail aria-label="Bereich einklappen"><Arrow strong turn={270} /></TabTail>
      </TabBar>
      <CostPanel>
        <RateGrid>
          <label htmlFor="satz">Verrechnungssatz/Std.</label>
          <RateNum id="satz" defaultValue="0,00 €" /><span /><span /><span />
          <label htmlFor="minuten">Minuten pro Monat</label>
          <RateNum id="minuten" defaultValue="0,000" />
          <Mid>mit</Mid>
          <Num aria-label="Mann je Einheit" defaultValue="1,00" />
          <Tail>Mann = 0,00 Stunden/Einheit</Tail>
          <label htmlFor="stunden">Stunden für 1 Monat</label>
          <RateNum id="stunden" defaultValue="0,000" />
          <Mid>mit</Mid>
          <Num aria-label="Mann je Position" defaultValue="1,00" />
          <Tail>Mann = 0,00 Stunden/Position</Tail>
        </RateGrid>
        <Group>
          <CostTable>
            <colgroup>
              <col /><col width={98} /><col width={98} /><col width={72} /><col width={98} /><col width={72} /><col width={98} />
            </colgroup>
            <thead>
              <tr>
                <CostHead><CostHeadText $first>Kostenart</CostHeadText></CostHead>
                {costCols.map(c => <CostHead key={c}><CostHeadText>{c}</CostHeadText></CostHead>)}
              </tr>
            </thead>
            <tbody>
              {costRows.map(([name, vals]) => (
                <tr key={name}>
                  <th>{name}</th>
                  {vals.map((v, i) => <td key={i}><Num aria-label={`${name} ${costCols[i]}`} defaultValue={v} /></td>)}
                </tr>
              ))}
              <tr><Divider colSpan={7} /></tr>
              <tr>
                <th><Subtotal>Zwischensumme</Subtotal></th>
                {materialRow.map((v, i) => (
                  <td key={i}><Num aria-label={`Zwischensumme ${costCols[i]}`} defaultValue={v} $ro={i < 5} readOnly={i < 5} /></td>
                ))}
              </tr>
              <tr>
                <th>Rabatt</th>
                <td colSpan={3}><RabattInput aria-label="Rabattext" placeholder="Rabattext" /></td>
                <td><Num aria-label="Rabatt Gewinn" defaultValue="0,00 €" /></td>
                <td><Num aria-label="Rabatt Gewinn %" defaultValue="0,00 %" /></td>
                <td><Num aria-label="Rabatt Summen" defaultValue="0,00 €" $ro readOnly /></td>
              </tr>
              <tr><Divider colSpan={7} /></tr>
              <tr>
                <th>Summe</th>
                <td colSpan={3} />
                <td><Num aria-label="Summe Gewinn" defaultValue="59,00 €" $ro readOnly /></td>
                <td><Num aria-label="Summe Gewinn %" defaultValue="0,00 €" $ro readOnly /></td>
                <td><Num aria-label="Summe Summen" defaultValue="59,00 €" $ro readOnly /></td>
              </tr>
            </tbody>
          </CostTable>
        </Group>
      </CostPanel>
    </>
  );
}

/* ---------- application ---------- */

function SharedTools() {
  return (
    <>
      <IconButton aria-label="Positionsauswahl öffnen"><PickIcon /></IconButton>
      <TextButton $w={115}>Positionsauswahl</TextButton>
      <Sep />
      <Ball tone="blue">K</Ball>
      <Ball tone="green">T</Ball>
      <Ball tone="orange">U</Ball>
      <Ball tone="red">FP</Ball>
      <Ball tone="yellow">FT</Ball>
      <Sep />
      <Ball tone="green">S</Ball>
      <Sep />
      <IconButton aria-label="Löschen"><CrossIcon /></IconButton>
      <Sep />
      <IconButton aria-label="Links"><Arrow /></IconButton>
      <IconButton aria-label="Rechts"><Arrow turn={180} /></IconButton>
      <IconButton aria-label="Hoch"><Arrow turn={90} /></IconButton>
      <IconButton aria-label="Runter"><Arrow strong turn={270} /></IconButton>
    </>
  );
}

const menus = ['Datei', 'Bearbeiten', 'Ansicht', 'Einfügen', 'Format', 'Tabelle'];

export default function App() {
  return (
    <Window>
      <GlobalStyle />
      <TitleBar>
        <AppIcon />
        Mustermann, Max/Rödermark#0001 - Angebot AN18/0970
        <WindowButtons>
          <WindowButton aria-label="Minimieren"><svg width="10" height="10"><path d="M0 5.5H10" stroke="#000" /></svg></WindowButton>
          <WindowButton aria-label="Maximieren"><svg width="10" height="10"><rect x="0.5" y="0.5" width="9" height="9" fill="none" stroke="#000" /></svg></WindowButton>
          <WindowButton aria-label="Schließen"><svg width="10" height="10"><path d="M0 0 10 10M10 0 0 10" stroke="#000" /></svg></WindowButton>
        </WindowButtons>
      </TitleBar>
      <MenuBar>
        {menus.map(m => <MenuItem key={m}><u>{m[0]}</u>{m.slice(1)}</MenuItem>)}
        <MenuItem>Fernwartung</MenuItem>
      </MenuBar>
      <HeadRow>
        <Heading>Mustermann, Max/Rödermark#0001</Heading>
        <HeadLabel htmlFor="schriftstueck">Schriftstück</HeadLabel>
        <Combo id="schriftstueck" name="Schriftstück" value="AN18/0970" w={291} look="metal" edge="#00007f" />
        <LeaveButton><Swoosh size={32} /><span><u>V</u>erlassen</span></LeaveButton>
      </HeadRow>
      <MainWrap>
        <TabBar>
          <Tab $w={86} $active>Schriftstück</Tab>
          <Tab $w={95}>Einstellungen</Tab>
          <Tab $w={154}>Enthaltene Materialien</Tab>
          <Tab $w={116} disabled>Soll/Ist-Vergleich</Tab>
          <Tab $w={99}>Dateianhänge</Tab>
        </TabBar>
        <MainPanel>
          <Toolbar $h={32} $bottom={2}>
            <IconButton aria-label="Rückgängig"><Swoosh size={17} /></IconButton>
            <IconButton aria-label="Wiederholen"><Swoosh size={17} flip grey /></IconButton>
            <SharedTools />
            <Sep />
            <Ball tone="grey">Z</Ball>
            <IconButton aria-label="Rechner"><CalcIcon /></IconButton>
            <IconButton aria-label="Summenbild"><SumIcon /></IconButton>
            <IconButton aria-label="Drucken"><PrinterIcon /></IconButton>
            <Sep />
            <IconButton aria-label="Hinweis"><BulbIcon /></IconButton>
            <Sep />
            <IconButton aria-label="Funktionsliste"><ScriptIcon /></IconButton>
            <TextButton $small $w={84} $indent={6}>Funktionen</TextButton>
            <IconButton aria-label="Optionen"><GearIcon /></IconButton>
            <TextButton $w={83} $indent={0}>Einstellungen</TextButton>
            <IconButton aria-label="Sperre"><LockIcon /></IconButton>
            <TextButton>Entsperrt</TextButton>
          </Toolbar>
          <Columns>
            <DocumentView />
            <SplitterV />
            <Column>
              <PositionsView />
              <SplitterH />
              <CostView />
            </Column>
          </Columns>
        </MainPanel>
      </MainWrap>
    </Window>
  );
}
